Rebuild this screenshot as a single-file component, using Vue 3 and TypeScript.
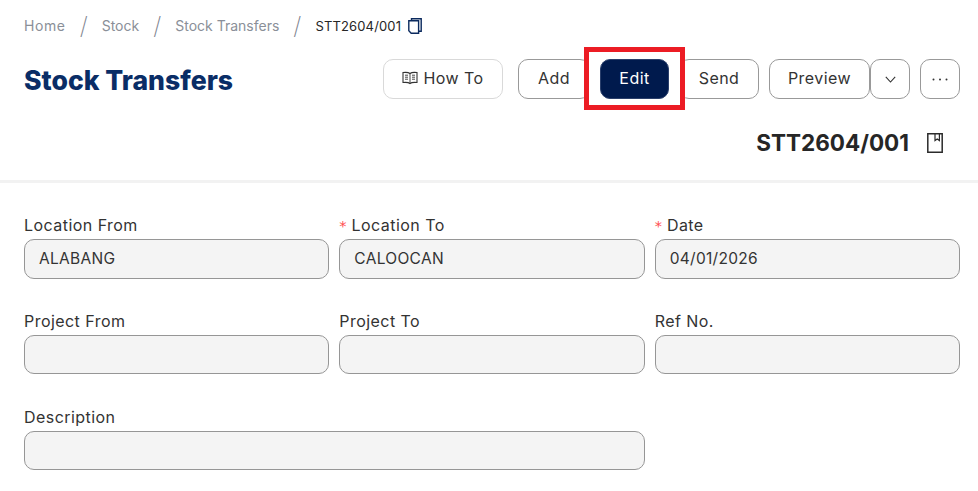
<script setup lang="ts">
interface Field { label: string; value: string; required?: boolean; wide?: boolean }
const crumbs: string[] = ['Home', 'Stock', 'Stock Transfers']
const fields: Field[] = [
  { label: 'Location From', value: 'ALABANG' },
  { label: 'Location To', value: 'CALOOCAN', required: true },
  { label: 'Date', value: '04/01/2026', required: true },
  { label: 'Project From', value: '' },
  { label: 'Project To', value: '' },
  { label: 'Ref No.', value: '' },
  { label: 'Description', value: '', wide: true },
]
</script>

<template>
  <div class="page">
    <nav class="crumbs">
      <template v-for="c in crumbs" :key="c">
        <span class="crumb">{{ c }}</span>
        <span class="sep">/</span>
      </template>
      <span class="current">STT2604/001</span>
      <svg class="copy" width="14" height="16" viewBox="0 0 14 16" fill="none" stroke="#0b2a5e" stroke-width="1.4">
        <path d="M3.500 2.600V.8h9.700v12.400h-2.400" />
        <path d="M.8 2.800h9.800v12.400H3.200L.8 12.800z" />
      </svg>
    </nav>

    <header class="head">
      <h1 class="title">Stock Transfers</h1>
      <div class="actions">
        <button class="btn howto">
          <svg width="16" height="14" viewBox="0 0 16 14" fill="none" stroke="#333" stroke-width="1.1">
            <path d="M8 2.500C6.500 1.300 3.500 1.200 1 1.500v10c2.500-.3 5.500-.2 7 1 1.500-1.200 4.500-1.300 7-1v-10c-2.500-.3-5.500-.2-7 1z" />
            <path d="M8 2.500v10M3 4.200h3M3 6.200h3M3 8.200h3M10 4.200h3M10 6.200h3M10 8.200h3" stroke-width=".9" />
          </svg>
          How To
        </button>
        <div class="group">
          <button class="btn add">Add</button>
          <span class="highlight"><button class="btn edit">Edit</button></span>
          <button class="btn send">Send</button>
        </div>
        <div class="pair">
          <button class="btn preview">Preview</button>
          <button class="btn square">
            <svg width="11" height="7" viewBox="0 0 11 7" fill="none" stroke="#333" stroke-width="1.1"><path d="M.8.800l4.700 5.200L10.200.8" /></svg>
          </button>
        </div>
        <button class="btn square more">
          <svg width="16" height="3" viewBox="0 0 16 3" fill="#333"><circle cx="1.500" cy="1.500" r="1" /><circle cx="8" cy="1.500" r="1" /><circle cx="14.500" cy="1.500" r="1" /></svg>
        </button>
      </div>
    </header>

    <div class="docbar">
      <span class="docno">STT2604/001</span>
      <svg width="16" height="20" viewBox="0 0 16 20" fill="none" stroke="#2b2b2b" stroke-width="1.500">
        <path d="M.8.800h14.400v18.400H.8z" />
        <path d="M8 1v6.500l2.200-1.600L12.400 7.500V1" stroke-width="1.200" />
      </svg>
    </div>

    <form class="grid">
      <div v-for="f in fields" :key="f.label" class="field" :class="{ wide: f.wide }">
        <label class="label"><span v-if="f.required" class="req">*</span>{{ f.label }}</label>
        <div class="input">{{ f.value }}</div>
      </div>
    </form>
  </div>
</template>

<style>
html, body { margin: 0; background: #fff; }
</style>

<style scoped>
.page {
  width: 978px;
  height: 491px;
  overflow: hidden;
  font-family: "Inter", "Liberation Sans", sans-serif;
  color: #333;
  box-sizing: border-box;
}
.crumbs {
  display: flex;
  align-items: center;
  height: 20px;
  padding: 16px 0 0 24px;
  font-size: 14px;
  color: #8a8f98;
}
.crumb { padding-bottom: 1px; }
.crumb:first-child { letter-spacing: .6px; }
.sep { margin: 0 14px; font-size: 24px; font-weight: 200; color: #7f8590; line-height: 20px; }
.current { color: #262626; font-size: 13px; letter-spacing: .15px; }
.copy { margin-left: 7px; }
.head {
  display: flex;
  align-items: flex-start;
  justify-content: space-between;
  padding: 23px 18px 0 24px;
}
.title { margin: 6px 0 0; font-size: 26.600px; line-height: 30px; font-weight: 800; color: #0a2d66; }
.actions { display: flex; align-items: center; }
.btn {
  box-sizing: border-box;
  height: 40px;
  background: #fff;
  border: 1px solid #999;
  border-radius: 10px;
  font: inherit;
  font-size: 16px;
  letter-spacing: .45px;
  color: #333;
  padding: 0 0 2px;
  display: inline-flex;
  align-items: center;
  justify-content: center;
  gap: 5px;
}
.square { padding: 0; }
.howto { width: 120px; border-color: #d9d9d9; margin-right: 15px; }
.group { display: flex; align-items: center; margin-right: 10px; }
.add { width: 72px; }
.send { width: 80px; margin-left: -6px; }
.highlight {
  position: relative;
  z-index: 1;
  box-sizing: border-box;
  display: block;
  width: 101px;
  height: 63px;
  margin: -12px 0 -11px -6px;
  border: 5px solid #ec1c24;
  background: #fff;
  padding: 7px 0 0 11px;
}
.edit { width: 69px; height: 40px; background: #001a4d; border-color: #2a3f6b; color: #fff; }
.pair { display: flex; margin-right: 10px; }
.preview { width: 101px; }
.square { width: 40px; }
.docbar {
  display: flex;
  align-items: center;
  justify-content: flex-end;
  gap: 18px;
  box-sizing: content-box;
  height: 28px;
  padding: 30px 35px 23px 0;
  border-bottom: 3px solid #f2f2f2;
}
.docno { font-size: 22.500px; font-weight: 700; color: #262626; padding-bottom: 2px; }
.grid {
  display: grid;
  grid-template-columns: repeat(3, 305.330px);
  column-gap: 10px;
  row-gap: 16px;
  padding: 31px 18px 0 24px;
}
.field { height: 79.800px; }
.field.wide { grid-column: span 2; }
.label {
  display: block;
  height: 22px;
  margin-bottom: 3px;
  font-size: 16px;
  letter-spacing: .45px;
  line-height: 22px;
  color: #333;
}
.req { color: #ff4d4f; margin-right: 5px; font-size: 14.500px; font-family: "DejaVu Sans", sans-serif; letter-spacing: 0; }
.input {
  box-sizing: border-box;
  height: 39.500px;
  padding: 0 14px;
  background: #f4f4f4;
  border: 1px solid #969696;
  border-radius: 10px;
  font-size: 15.500px;
  letter-spacing: .3px;
  line-height: 38px;
  color: #333;
}
</style>
